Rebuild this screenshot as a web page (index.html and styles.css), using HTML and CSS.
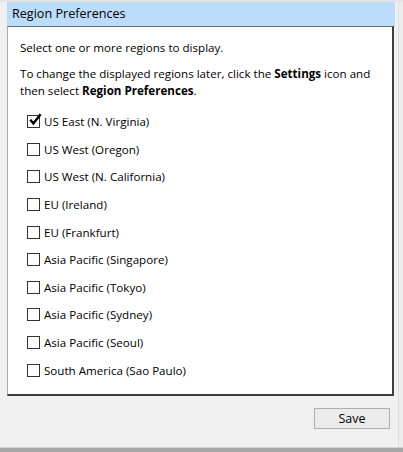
FILE: index.html
```html
<!DOCTYPE html>
<html>
<head>
<meta charset="utf-8">
<link rel="stylesheet" href="styles.css">
</head>
<body>
<div class="window">
  <div class="dialog">
    <div class="title">Region Preferences</div>
    <div class="panel">
      <p class="intro">Select one or more regions to display.</p>
      <p class="intro">To change the displayed regions later, click the <b>Settings</b> icon and<br>then select <b>Region Preferences</b>.</p>
      <ul class="regions">
        <li><span class="cb"><svg viewBox="0 0 14 14" width="14" height="14"><path d="M2.2 6.8 L5.4 10.4 L12.6 1.2" fill="none" stroke="#000" stroke-width="2.4"/></svg></span>US East (N. Virginia)</li>
        <li><span class="cb"></span>US West (Oregon)</li>
        <li><span class="cb"></span>US West (N. California)</li>
        <li><span class="cb"></span>EU (Ireland)</li>
        <li><span class="cb"></span>EU (Frankfurt)</li>
        <li><span class="cb"></span>Asia Pacific (Singapore)</li>
        <li><span class="cb"></span>Asia Pacific (Tokyo)</li>
        <li><span class="cb"></span>Asia Pacific (Sydney)</li>
        <li><span class="cb"></span>Asia Pacific (Seoul)</li>
        <li><span class="cb"></span>South America (Sao Paulo)</li>
      </ul>
    </div>
    <div class="footer"><button class="save">Save</button></div>
  </div>
  <div class="edge"></div>
</div>
<div class="bottom"></div>
</body>
</html>
```
FILE: styles.css
```css
html, body {
  margin: 0;
  padding: 0;
  height: 452px;
  overflow: hidden;
}
body {
  background: #f0f0f0;
  font-family: "Open Sans", "Noto Sans", sans-serif;
  font-size: 11.6px;
  color: #000;
  display: flex;
  flex-direction: column;
  border-top: 2px solid #e4e4e4;
  box-sizing: border-box;
}
.window {
  flex: 1;
  display: flex;
  padding-left: 7px;
}
.dialog {
  width: 388px;
  display: flex;
  flex-direction: column;
}
.title {
  height: 24px;
  background: #bcdcfb;
  font-size: 12.6px;
  line-height: 24px;
  padding-left: 5px;
  color: #000;
}
.panel {
  width: 387px;
  box-sizing: border-box;
  height: 370px;
  background: #fff;
  border-top: 1px solid #6a6a6a;
  border-left: 1px solid #a8a8a8;
  border-right: 2px solid #3c3c3c;
  border-bottom: 2px solid #3c3c3c;
  padding: 12px 12px 0 12px;
}
.intro {
  margin: 0 0 9px 0;
  line-height: 17px;
}
.regions {
  list-style: none;
  margin: 4px 0 0 0;
  padding: 0 0 0 7px;
  display: flex;
  flex-direction: column;
}
.regions li {
  height: 27.6px;
  flex: none;
  display: flex;
  align-items: center;
}
.cb {
  width: 13px;
  height: 13px;
  box-sizing: border-box;
  border: 1px solid #333;
  background: #fff;
  margin-right: 4px;
  position: relative;
  flex: none;
}
.cb svg {
  position: absolute;
  left: 0;
  top: -3px;
}
.footer {
  flex: 1;
  display: flex;
  justify-content: flex-end;
  align-items: flex-start;
  padding-top: 12px;
  padding-right: 5px;
}
.save {
  width: 76px;
  height: 21px;
  background: #ebebeb;
  border: 1px solid #adadad;
  border-radius: 0;
  font-family: "Open Sans", "Noto Sans", sans-serif;
  font-size: 12.5px;
  color: #000;
  padding: 0;
}
.edge {
  flex: 1;
  margin-left: 3px;
  border-left: 1px solid #dedede;
  background: #ececec;
}
.bottom {
  height: 4px;
  border-top: 1px solid #d2d2d2;
  background: #a6a6a6;
}
```
